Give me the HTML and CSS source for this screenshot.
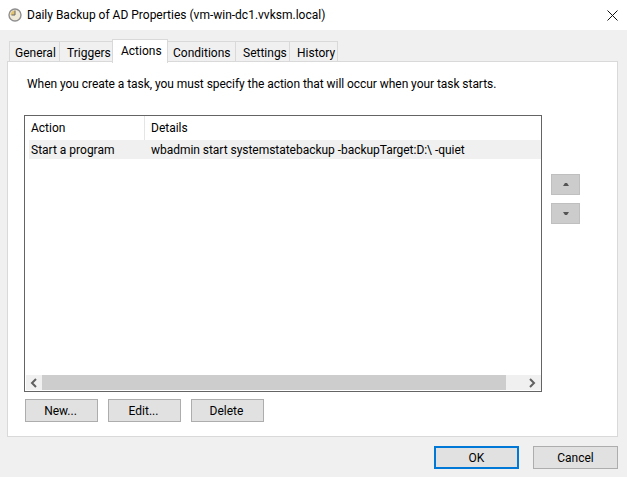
FILE: index.html
```html
<!DOCTYPE html>
<html lang="en">
<head>
<meta charset="utf-8">
<title>Daily Backup of AD Properties</title>
<link rel="stylesheet" href="styles.css">
</head>
<body>
<div class="dialog">
  <header class="titlebar">
    <svg class="clock" width="16" height="16" viewBox="0 0 16 16">
      <circle cx="8" cy="8" r="6" fill="#efe9d8" stroke="#8f8f8f" stroke-width="1.4"/>
      <path d="M8 8 L8 3.5 A4.5 4.5 0 0 0 3.5 8 Z" fill="#e3c46e"/>
      <path d="M8 3.5 V8 H4.5" fill="none" stroke="#666" stroke-width="1"/>
    </svg>
    <span class="title">Daily Backup of AD Properties (vm-win-dc1.vvksm.local)</span>
    <svg class="close" width="11" height="11" viewBox="0 0 11 11">
      <path d="M0.5 0.5 L10.5 10.5 M10.5 0.5 L0.5 10.5" stroke="#111" stroke-width="1" fill="none"/>
    </svg>
  </header>
  <main class="body">
    <nav class="tabs">
      <div class="tab t1">General</div>
      <div class="tab t2">Triggers</div>
      <div class="tab t3 active">Actions</div>
      <div class="tab t4">Conditions</div>
      <div class="tab t5">Settings</div>
      <div class="tab t6">History</div>
    </nav>
    <section class="panel">
      <p class="intro">When you create a task, you must specify the action that will occur when your task starts.</p>
      <div class="listrow">
        <div class="list">
          <div class="head">
            <div class="cell c1">Action</div>
            <div class="cell c2">Details</div>
          </div>
          <div class="row">
            <div class="cell c1b">Start a program</div>
            <div class="cell c2b">wbadmin start systemstatebackup -backupTarget:D:\ -quiet</div>
          </div>
          <div class="spacer"></div>
          <div class="scroll">
            <div class="sbtn">
              <svg width="8" height="10" viewBox="0 0 8 10"><path d="M6 1 L2 5 L6 9" fill="none" stroke="#606060" stroke-width="2"/></svg>
            </div>
            <div class="thumb"></div>
            <div class="sbtn right">
              <svg width="8" height="10" viewBox="0 0 8 10"><path d="M2 1 L6 5 L2 9" fill="none" stroke="#606060" stroke-width="2"/></svg>
            </div>
          </div>
        </div>
        <div class="updown">
          <div class="arrow">
            <svg width="6" height="3" viewBox="0 0 6 3"><path d="M2 0 H4 L6 3 H0 Z" fill="#555"/></svg>
          </div>
          <div class="arrow">
            <svg width="6" height="3" viewBox="0 0 6 3"><path d="M0 0 H6 L4 3 H2 Z" fill="#555"/></svg>
          </div>
        </div>
      </div>
      <div class="actions">
        <button class="btn small">New...</button>
        <button class="btn small">Edit...</button>
        <button class="btn small">Delete</button>
      </div>
    </section>
    <footer class="footer">
      <button class="btn big primary">OK</button>
      <button class="btn big">Cancel</button>
    </footer>
  </main>
</div>
</body>
</html>
```
FILE: styles.css
```css
* { box-sizing: border-box; }
html, body { margin: 0; padding: 0; }
body {
  width: 627px;
  height: 477px;
  overflow: hidden;
  font-family: Roboto, "Noto Sans", sans-serif;
  font-size: 12px;
  color: #000;
}
.dialog { width: 627px; height: 477px; display: flex; flex-direction: column; }
.titlebar {
  height: 30px;
  background: #fff;
  display: flex;
  align-items: center;
  padding: 0 9px 0 7px;
  flex: none;
}
.clock { flex: none; margin-right: 4px; }
.title { flex: 1; white-space: nowrap; }
.close { flex: none; }
.body {
  flex: 1;
  background: #f0f0f0;
  padding: 9px 9px 0 7px;
  display: flex;
  flex-direction: column;
}
.tabs { display: flex; height: 23px; padding-left: 2px; position: relative; z-index: 1; flex: none; }
.tab {
  height: 21px;
  margin-top: 2px;
  background: #f0f0f0;
  border: 1px solid #d9d9d9;
  border-left-width: 0;
  line-height: 22px;
  white-space: nowrap;
  padding-left: 7px;
}
.t1 { width: 51px; border-left-width: 1px; padding-left: 5px; }
.t2 { width: 53px; }
.t3 { width: 56px; }
.t4 { width: 68px; padding-left: 5px; }
.t5 { width: 54px; }
.t6 { width: 48px; }
.tab.active {
  background: #fff;
  height: 24px;
  margin-top: 0;
  border-bottom: 0;
  border-left-width: 1px;
  margin-left: -1px;
  padding-left: 8px;
  position: relative;
}
.panel {
  height: 376px;
  flex: none;
  margin-top: -1px;
  background: #fff;
  border: 1px solid #d9d9d9;
  padding: 14px 0 0 16px;
  display: flex;
  flex-direction: column;
}
.intro { margin: 0; height: 16px; line-height: 16px; padding-left: 3px; white-space: nowrap; letter-spacing: -0.055px; }
.listrow { display: flex; margin-top: 23px; height: 277px; }
.list {
  width: 518px;
  height: 277px;
  border: 1px solid #646464;
  display: flex;
  flex-direction: column;
  padding: 0 0 0 1px;
}
.head { display: flex; height: 24px; flex: none; }
.cell { white-space: nowrap; padding-left: 5px; line-height: 25px; }
.c1 { width: 119px; border-right: 1px solid #e5e5e5; }
.c2 { flex: 1; padding-left: 6px; }
.row { display: flex; height: 19px; margin-left: 3px; background: #f0f0f0; flex: none; }
.row .cell { line-height: 21px; }
.c1b { width: 116px; padding-left: 2px; }
.c2b { flex: 1; padding-left: 6px; letter-spacing: -0.035px; }
.spacer { flex: 1; }
.scroll { display: flex; height: 15px; flex: none; margin-bottom: 1px; background: #f0f0f0; }
.sbtn { width: 16px; display: flex; align-items: center; justify-content: center; flex: none; }
.sbtn.right { width: 35px; justify-content: flex-end; padding-right: 5px; }
.thumb { flex: 1; background: #cdcdcd; }
.updown { display: flex; flex-direction: column; gap: 8px; margin: 59px 0 0 9px; }
.arrow {
  width: 29px;
  height: 21px;
  background: #cccccc;
  border: 1px solid #bfbfbf;
  display: flex;
  align-items: center;
  justify-content: center;
}
.actions { display: flex; gap: 10px; margin-top: 7px; padding-left: 1px; }
.btn {
  font: inherit;
  color: #000;
  background: #e1e1e1;
  border: 1px solid #adadad;
  padding: 0 2px 0 0;
  margin: 0;
  height: 23px;
}
.small { width: 73px; }
.footer { display: flex; justify-content: flex-end; gap: 14px; margin-top: 9px; }
.big { width: 85px; padding: 0; }
.primary { border: 2px solid #0078d7; }
```
